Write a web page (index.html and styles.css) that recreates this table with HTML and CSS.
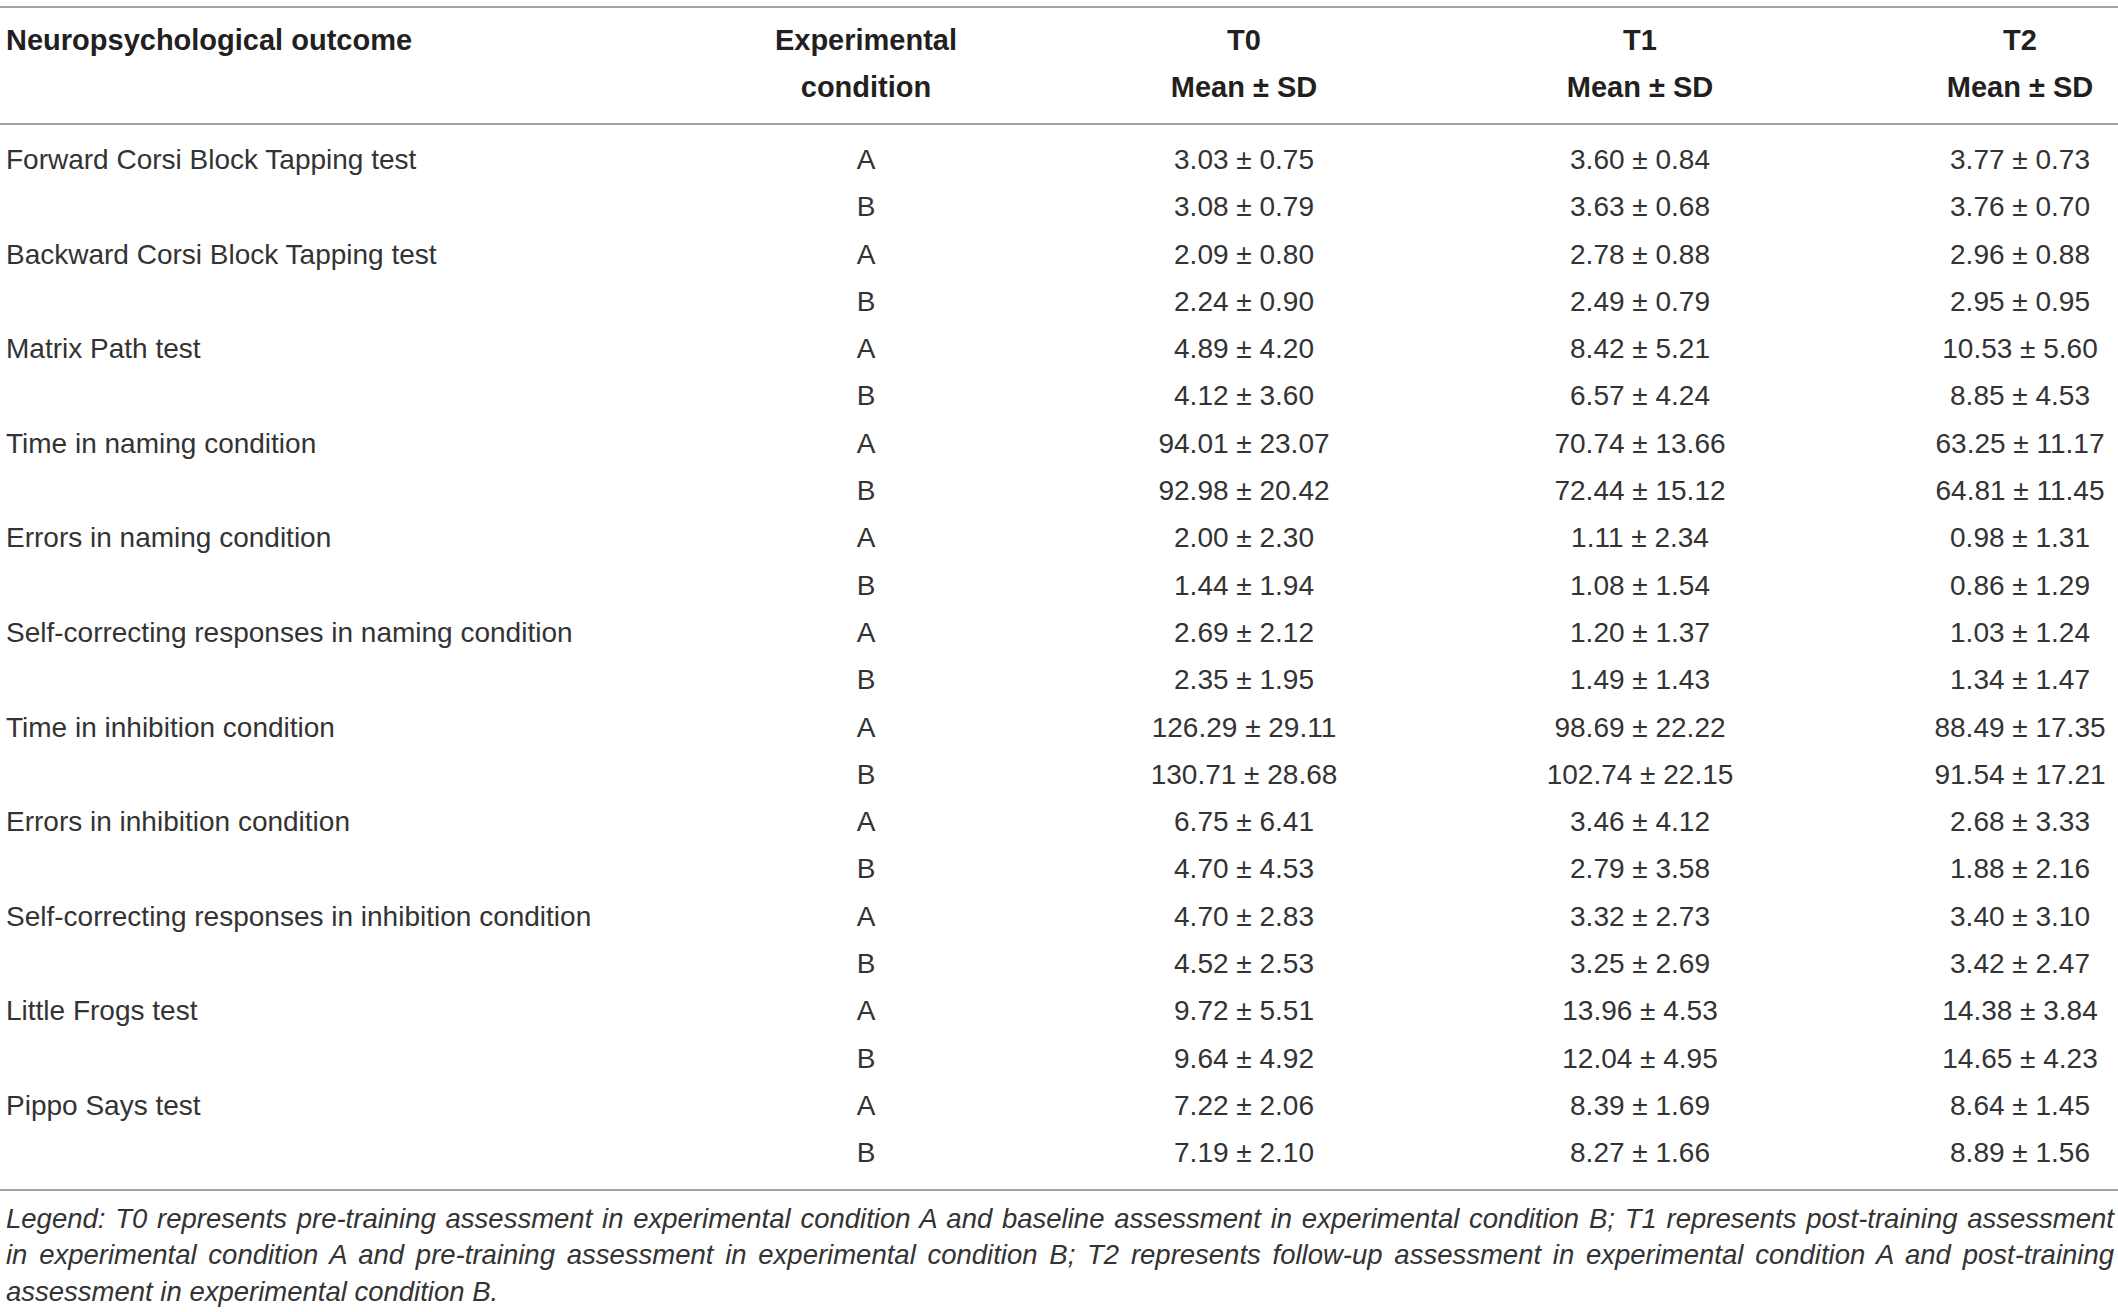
FILE: index.html
```html
<!DOCTYPE html>
<html lang="en">
<head>
    <meta charset="UTF-8">
    <title>Neuropsychological outcomes</title>
    <link rel="stylesheet" href="styles.css">
</head>
<body>

<div class="table-wrap">
    <table class="results">
        <colgroup>
            <col class="col-outcome">
            <col class="col-cond">
            <col class="col-t0">
            <col class="col-t1">
            <col class="col-t2">
        </colgroup>
        <thead>
            <tr>
                <th class="left">Neuropsychological outcome</th>
                <th>Experimental<br>condition</th>
                <th>T0<br>Mean ± SD</th>
                <th>T1<br>Mean ± SD</th>
                <th>T2<br>Mean ± SD</th>
            </tr>
        </thead>
        <tbody>
            <tr><td class="left">Forward Corsi Block Tapping test</td><td>A</td><td>3.03 ± 0.75</td><td>3.60 ± 0.84</td><td>3.77 ± 0.73</td></tr>
            <tr><td class="left"></td><td>B</td><td>3.08 ± 0.79</td><td>3.63 ± 0.68</td><td>3.76 ± 0.70</td></tr>
            <tr><td class="left">Backward Corsi Block Tapping test</td><td>A</td><td>2.09 ± 0.80</td><td>2.78 ± 0.88</td><td>2.96 ± 0.88</td></tr>
            <tr><td class="left"></td><td>B</td><td>2.24 ± 0.90</td><td>2.49 ± 0.79</td><td>2.95 ± 0.95</td></tr>
            <tr><td class="left">Matrix Path test</td><td>A</td><td>4.89 ± 4.20</td><td>8.42 ± 5.21</td><td>10.53 ± 5.60</td></tr>
            <tr><td class="left"></td><td>B</td><td>4.12 ± 3.60</td><td>6.57 ± 4.24</td><td>8.85 ± 4.53</td></tr>
            <tr><td class="left">Time in naming condition</td><td>A</td><td>94.01 ± 23.07</td><td>70.74 ± 13.66</td><td>63.25 ± 11.17</td></tr>
            <tr><td class="left"></td><td>B</td><td>92.98 ± 20.42</td><td>72.44 ± 15.12</td><td>64.81 ± 11.45</td></tr>
            <tr><td class="left">Errors in naming condition</td><td>A</td><td>2.00 ± 2.30</td><td>1.11 ± 2.34</td><td>0.98 ± 1.31</td></tr>
            <tr><td class="left"></td><td>B</td><td>1.44 ± 1.94</td><td>1.08 ± 1.54</td><td>0.86 ± 1.29</td></tr>
            <tr><td class="left">Self-correcting responses in naming condition</td><td>A</td><td>2.69 ± 2.12</td><td>1.20 ± 1.37</td><td>1.03 ± 1.24</td></tr>
            <tr><td class="left"></td><td>B</td><td>2.35 ± 1.95</td><td>1.49 ± 1.43</td><td>1.34 ± 1.47</td></tr>
            <tr><td class="left">Time in inhibition condition</td><td>A</td><td>126.29 ± 29.11</td><td>98.69 ± 22.22</td><td>88.49 ± 17.35</td></tr>
            <tr><td class="left"></td><td>B</td><td>130.71 ± 28.68</td><td>102.74 ± 22.15</td><td>91.54 ± 17.21</td></tr>
            <tr><td class="left">Errors in inhibition condition</td><td>A</td><td>6.75 ± 6.41</td><td>3.46 ± 4.12</td><td>2.68 ± 3.33</td></tr>
            <tr><td class="left"></td><td>B</td><td>4.70 ± 4.53</td><td>2.79 ± 3.58</td><td>1.88 ± 2.16</td></tr>
            <tr><td class="left">Self-correcting responses in inhibition condition</td><td>A</td><td>4.70 ± 2.83</td><td>3.32 ± 2.73</td><td>3.40 ± 3.10</td></tr>
            <tr><td class="left"></td><td>B</td><td>4.52 ± 2.53</td><td>3.25 ± 2.69</td><td>3.42 ± 2.47</td></tr>
            <tr><td class="left">Little Frogs test</td><td>A</td><td>9.72 ± 5.51</td><td>13.96 ± 4.53</td><td>14.38 ± 3.84</td></tr>
            <tr><td class="left"></td><td>B</td><td>9.64 ± 4.92</td><td>12.04 ± 4.95</td><td>14.65 ± 4.23</td></tr>
            <tr><td class="left">Pippo Says test</td><td>A</td><td>7.22 ± 2.06</td><td>8.39 ± 1.69</td><td>8.64 ± 1.45</td></tr>
            <tr><td class="left"></td><td>B</td><td>7.19 ± 2.10</td><td>8.27 ± 1.66</td><td>8.89 ± 1.56</td></tr>
        </tbody>
    </table>

    <!-- legend under the table -->
    <div class="legend">
        <span class="legend-line">Legend: T0 represents pre-training assessment in experimental condition A and baseline assessment in experimental condition B; T1 represents post-training assessment</span>
        <span class="legend-line">in experimental condition A and pre-training assessment in experimental condition B; T2 represents follow-up assessment in experimental condition A and post-training</span>
        <span class="legend-line last">assessment in experimental condition B.</span>
    </div>
</div>

</body>
</html>
```

FILE: styles.css
```css
body {
    margin: 0;
    padding: 0;
    background-color: #fff;
    color: #231f20;
    font-family: "Liberation Sans", Arial, sans-serif;
}
.table-wrap {
    width: 2118px;
    padding-top: 6px;
}
.results {
    width: 2118px;
    border-collapse: collapse;
    table-layout: fixed;
    font-size: 28px;
    border-top: 2px solid #a3a3a3;
    border-bottom: 2px solid #a3a3a3;
}
.col-outcome { width: 602px; }
.col-cond { width: 528px; }
.col-t0 { width: 228px; }
.col-t1 { width: 564px; }
.col-t2 { width: 196px; }

.results th {
    font-size: 29px;
    font-weight: bold;
    text-align: center;
    vertical-align: top;
    line-height: 47px;
    padding: 9px 0 12px;
    white-space: nowrap;
    border-bottom: 2px solid #a3a3a3;
}
.results td {
    color: #333;
    text-align: center;
    line-height: 47.3px;
    padding: 0;
    white-space: nowrap;
}
.results .left {
    text-align: left;
    padding-left: 6px;
}
.results tbody tr:first-child td {
    padding-top: 11px;
}
.results tbody tr:last-child td {
    padding-bottom: 12px;
}
.legend {
    padding: 10px 4px 0 6px;
    color: #333;
    font-style: italic;
    font-size: 27.5px;
    line-height: 36.5px;
}
.legend-line {
    display: block;
    white-space: nowrap;
    text-align: justify;
    text-align-last: justify;
}
.legend-line.last {
    text-align-last: left;
}
```
